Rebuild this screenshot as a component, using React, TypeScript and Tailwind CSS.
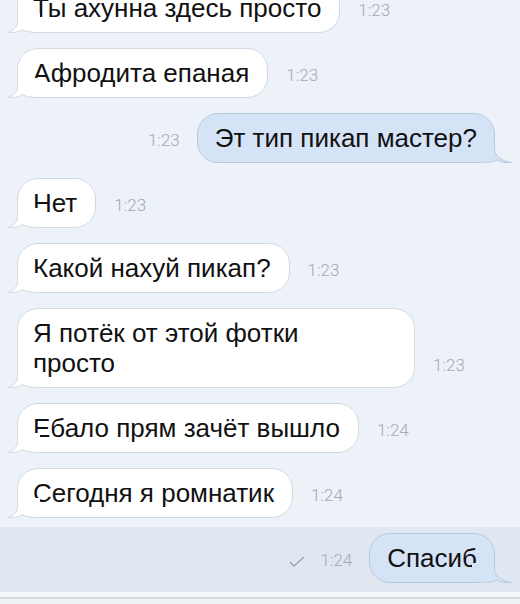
import type { ReactNode } from "react";

function Time({ children }: { children: ReactNode }) {
  return (
    <span className="mb-[13px] font-['Roboto','Liberation_Sans',sans-serif] text-[17px] font-light leading-[19px] text-[#a3aab4]">
      {children}
    </span>
  );
}

function Check() {
  return (
    <svg width="16" height="11" viewBox="0 0 16 11" className="mb-[16px]">
      <path d="M1 6.2 L5 10 L15 1" fill="none" stroke="#9ca3ad" strokeWidth="1.3" />
    </svg>
  );
}

function Incoming({
  text,
  time,
  width,
}: {
  text: ReactNode;
  time: string;
  width?: string;
}) {
  return (
    <div className="flex items-end gap-[18px] pl-[17px]">
      <div
        className={`relative rounded-[21px] border border-[#d3d9e2] bg-white pl-[15px] pr-[18px] py-[9px] text-[26px] leading-[30px] text-[#111] ${width ?? ""}`}
      >
        {text}
        <svg
          width="34"
          height="20"
          viewBox="0 0 34 20"
          className="absolute bottom-[-1px] left-[-12px]"
        >
          <path
            d="M12 0 L12 9 C12 14 7 18.5 1 19.5 C7 20 13 19 17 16.5 C20 18.8 25 19 34 19 L34 0 Z"
            fill="#fff"
          />
          <path
            d="M11.5 0 L11.5 9 C11.5 14 7 18.5 1 19.5 C7 20 13 19 17 16.5 C20 18.8 25 19.5 34 19.5"
            fill="none"
            stroke="#d3d9e2"
          />
        </svg>
      </div>
      <Time>{time}</Time>
    </div>
  );
}

function Outgoing({
  text,
  time,
  read,
}: {
  text: string;
  time: string;
  read?: boolean;
}) {
  return (
    <div className="flex items-end justify-end pr-[25px]">
      {read && <Check />}
      <span className="ml-[15px]" />
      <Time>{time}</Time>
      <div className="relative ml-[17px] rounded-[21px] border border-[#b9c9de] bg-[#d5e3f6] pl-[17px] pr-[17px] py-[9px] text-[26px] leading-[30px] text-[#111]">
        {text}
        <svg
          width="40"
          height="20"
          viewBox="0 0 40 20"
          className="absolute bottom-[-1px] right-[-18px]"
        >
          <path
            d="M22 0 L22 6 C22 12 28 18 39.5 19.5 C33 20 28 19 25 17 C21 19 17 19 0 19 L0 0 Z"
            fill="#d5e3f6"
          />
          <path
            d="M22.5 0 L22.5 6 C22.5 12 28 18 39.5 19.5 C33 20 28 19 25 17 C21 19 17 19.5 0 19.5"
            fill="none"
            stroke="#b9c9de"
          />
        </svg>
      </div>
    </div>
  );
}

export default function App() {
  return (
    <div className="h-[604px] w-[520px] overflow-hidden bg-[#edf1f8] font-['Liberation_Sans','Helvetica',sans-serif]">
      <div className="-mt-[17px] flex flex-col gap-[15px]">
        <Incoming text="Ты ахунна здесь просто" time="1:23" />
        <Incoming text="Афродита епаная" time="1:23" />
        <Outgoing text="Эт тип пикап мастер?" time="1:23" />
        <Incoming text="Нет" time="1:23" />
        <Incoming text="Какой нахуй пикап?" time="1:23" />
        <Incoming
          text={
            <>
              Я потёк от этой фотки
              <br />
              просто
            </>
          }
          time="1:23"
          width="w-[398px]"
        />
        <Incoming text="Ебало прям зачёт вышло" time="1:24" />
        <Incoming text="Сегодня я ромнатик" time="1:24" />
      </div>

      <div className="mt-[9px] bg-[#e1e7f1] pt-[6px] pb-[9px]">
        <Outgoing text="Спасиб" time="1:24" read />
      </div>
      <div className="h-[5px] bg-[#f3f6fa]" />
      <div className="h-[2px] bg-[#d7dce3]" />
      <div className="h-[10px] bg-[#eef1f5]" />
    </div>
  );
}
